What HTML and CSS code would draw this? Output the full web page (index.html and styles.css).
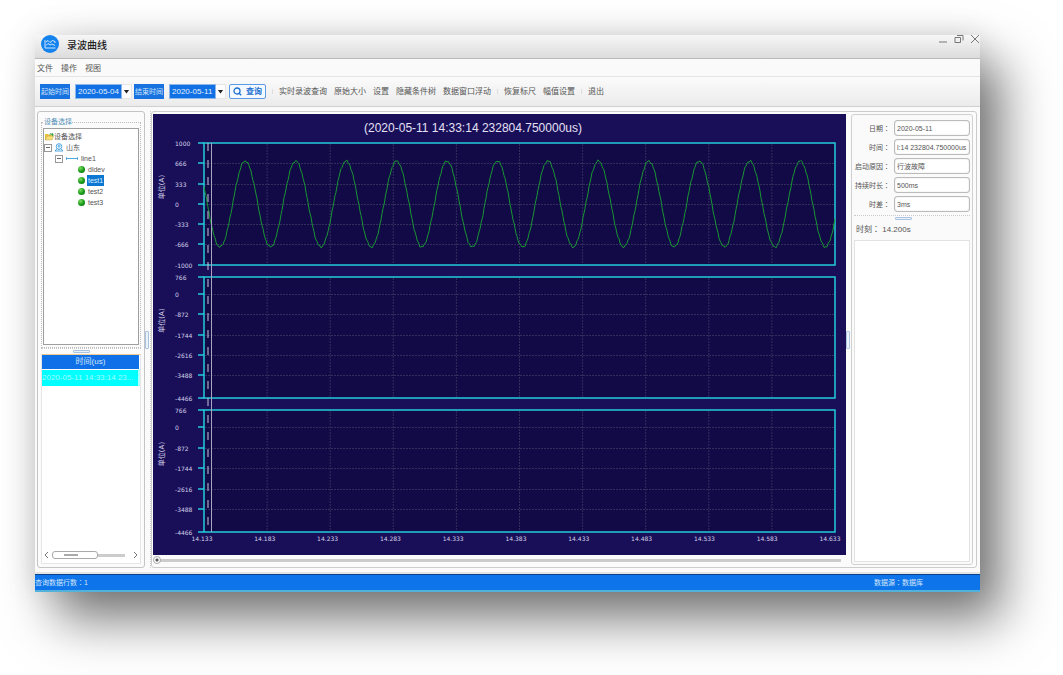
FILE: index.html
```html
<!DOCTYPE html>
<html lang="zh-CN">
<head>
<meta charset="utf-8">
<title>录波曲线</title>
<link rel="stylesheet" href="styles.css">
</head>
<body>
<div class="window">
  <header class="titlebar">
    <svg class="logo" viewBox="0 0 18 18" aria-hidden="true"><circle cx="9" cy="9" r="9" fill="#1583ee"/><path d="M4 5v8h10.500M5 7l2-1.500 2 2 2.500-2 2.500 1v1.500M5 10.500l2-2 2 1.500 2-1 3 1.500" fill="none" stroke="#fff" stroke-width=".8"/></svg>
    <h1>录波曲线</h1>
    <div class="winbuttons">
      <button type="button" aria-label="最小化"><svg viewBox="0 0 10 10"><path d="M1 8h8"/></svg></button>
      <button type="button" aria-label="还原"><svg viewBox="0 0 10 10"><path d="M1 3.500h5.500v5H1zM3 1.500h6v5"/></svg></button>
      <button type="button" aria-label="关闭"><svg viewBox="0 0 10 10"><path d="M1 1l8 8M9 1l-8 8"/></svg></button>
    </div>
  </header>

  <nav class="menubar">
    <button type="button">文件</button>
    <button type="button">操作</button>
    <button type="button">视图</button>
  </nav>

  <div class="toolbar">
    <label class="tag" for="from">起始时间</label>
    <span class="date"><input id="from" type="text" value="2020-05-04"><button type="button" aria-label="选择起始日期"></button></span>
    <label class="tag tag-end" for="to">结束时间</label>
    <span class="date"><input id="to" type="text" value="2020-05-11"><button type="button" aria-label="选择结束日期"></button></span>
    <button class="search" type="button"><svg viewBox="0 0 9 9" aria-hidden="true"><circle cx="4" cy="4" r="3" /><path d="M6 6l2.200 2.200"/></svg>查询</button>
    <span class="sep"></span>
    <div class="actions">
      <button type="button">实时录波查询</button>
      <button type="button">原始大小</button>
      <button type="button">设置</button>
      <button type="button">隐藏条件树</button>
      <button type="button">数据窗口浮动</button>
    </div>
    <span class="sep"></span>
    <div class="actions">
      <button type="button">恢复标尺</button>
      <button type="button">幅值设置</button>
    </div>
    <span class="sep"></span>
    <div class="actions"><button type="button">退出</button></div>
  </div>

  <div class="content">
    <aside class="side">
      <fieldset class="group">
        <legend>设备选择</legend>
        <ul class="tree">
          <li class="lv0 root"><svg viewBox="0 0 10 9" aria-hidden="true"><path d="M1 8V2h3l1 1h3v5z" fill="#e9c243"/><path d="M1 8l2-4h6.500L8 8z" fill="#f8e078" stroke="#a98b25" stroke-width=".4"/><path d="M5 3c1-2 2-2 3-1V.5L9.800 3 8 4.200V3c-1-.6-2-.4-3 0z" fill="#2d9a37"/></svg><span>设备选择</span></li>
          <li class="lv0"><i class="minus"></i><svg viewBox="0 0 10 9" aria-hidden="true"><g fill="none" stroke="#3a9de0" stroke-width=".9"><circle cx="5" cy="3.500" r="2.800"/><circle cx="5" cy="3.200" r="1"/><path d="M3 5.800L1 8h8L7 5.800M5 6v1"/></g></svg><span>山东</span></li>
          <li class="lv1"><i class="minus"></i><svg class="line" viewBox="0 0 14 9" aria-hidden="true"><path d="M1 4.500h12M1.500 3.200v2.600M12.500 3.200v2.600" fill="none" stroke="#4aa8dc"/></svg><span>line1</span></li>
          <li class="lv2"><i class="dot"></i><span>dldev</span></li>
          <li class="lv2"><i class="dot"></i><span class="selected">test1</span></li>
          <li class="lv2"><i class="dot"></i><span>test2</span></li>
          <li class="lv2"><i class="dot"></i><span>test3</span></li>
        </ul>
      </fieldset>
      <div class="hsplit"><i></i></div>
      <div class="records">
        <table>
          <thead><tr><th>时间(us)</th></tr></thead>
          <tbody><tr><td>2020-05-11 14:33:14 23...</td></tr></tbody>
        </table>
        <div class="hscroll">
          <button type="button" aria-label="向左"><svg viewBox="0 0 5 8"><path d="M4 1L1 4l3 3"/></svg></button>
          <div class="rail"><i></i></div>
          <button type="button" aria-label="向右"><svg viewBox="0 0 5 8"><path d="M1 1l3 3-3 3"/></svg></button>
        </div>
      </div>
    </aside>

    <div class="vsplit"><i></i></div>

    <main class="workspace">
      <section class="plot">
        <svg id="chart" class="chart" viewBox="0 0 693 441" role="img" aria-label="录波曲线图"></svg>
        <input class="slider" type="range" min="0" max="100" value="0" aria-label="时间位置">
      </section>
      <div class="vsplit vsplit-right"><i></i></div>
      <section class="detail">
        <form class="fields">
          <label for="d1">日期<span class="colon" lang="zh-TW">：</span></label><input id="d1" type="text" value="2020-05-11">
          <label for="d2">时间<span class="colon" lang="zh-TW">：</span></label><input id="d2" type="text" value="l:14 232804.750000us">
          <label for="d3">启动原因<span class="colon" lang="zh-TW">：</span></label><input id="d3" type="text" value="行波故障">
          <label for="d4">持续时长<span class="colon" lang="zh-TW">：</span></label><input id="d4" type="text" value="500ms">
          <label for="d5">时差<span class="colon" lang="zh-TW">：</span></label><input id="d5" type="text" value="3ms">
        </form>
        <div class="hsplit hsplit-detail"><i></i></div>
        <p class="moment">时刻<span class="colon" lang="zh-TW">：</span> 14.200s</p>
        <div class="values"></div>
      </section>
    </main>
  </div>

  <footer class="status"><span>查询数据行数<span class="colon" lang="zh-TW">：</span>1</span><span class="source">数据源<span class="colon" lang="zh-TW">：</span>数据库</span></footer>
</div>
<script src="chart.js"></script>
</body>
</html>
```

FILE: styles.css
```css
* { box-sizing: border-box; }

body {
  margin: 0;
  min-height: 100vh;
  padding: 35px 83px 83px 35px;
  background: #fff;
  color: #555;
  font: 8px/12px "Liberation Sans", "Noto Sans CJK SC", sans-serif;
  overflow-x: hidden;
}

button, input { margin: 0; padding: 0; font: inherit; color: inherit; }
button { border: 0; background: none; white-space: nowrap; }
.colon { font-family: "Noto Sans CJK TC", sans-serif; }

.window {
  display: flex;
  flex-direction: column;
  min-height: calc(100vh - 118px);
  background: #fafafa;
  box-shadow: 22px 28px 48px rgba(0, 0, 0, .52), 0 0 30px rgba(0, 0, 0, .12);
}

.titlebar {
  display: flex;
  align-items: center;
  height: 24px;
  padding: 0 0 5px 6px;
  background: linear-gradient(#f6f6f6, #dcdcdc);
  border-bottom: 1px solid #b9b9b9;
}
.logo { width: 18px; height: 18px; }
.titlebar h1 { margin: 0 0 0 8px; font-size: 10px; font-weight: 500; color: #222; padding-top: 4px; }
.winbuttons { display: flex; gap: 6px; margin-left: auto; padding-bottom: 11px; }
.winbuttons button { display: flex; height: 10px; }
.winbuttons svg { width: 10px; height: 10px; fill: none; stroke: #777; }

.menubar {
  display: flex;
  gap: 8px;
  height: 18px;
  padding: 2px 2px 0;
  background: #fafafa;
  border-bottom: 1px solid #e4e4e4;
}

.toolbar {
  display: flex;
  align-items: center;
  height: 30px;
  padding: 0 5px;
  background: linear-gradient(#fbfbfb, #ebebeb);
  border-bottom: 1px solid #d0d0d0;
}
.tag { height: 15px; width: 30px; background: #1873e0; color: #cfe3fb; font-size: 7px; line-height: 15px; text-align: center; white-space: nowrap; }
.date { display: flex; margin-left: 5px; }
.date input { width: 47px; height: 15px; padding: 0 2px; border: 1px solid #8fb8ea; background: #1070e4; color: #e4f0ff; }
.date button { width: 10px; height: 15px; border: 1px solid #e6e6e6; border-left: 0; background: #fcfcfc; }
.date button::after { content: ""; display: block; margin: 0 auto; width: 6px; height: 4px; background: #222; clip-path: polygon(0 0, 100% 0, 50% 100%); }
.tag-end { margin-left: 2px; }
.search {
  display: flex;
  align-items: center;
  justify-content: center;
  gap: 4px;
  width: 37px;
  height: 15px;
  margin-left: 3px;
  border: 1px solid #5a9be6;
  border-radius: 2px;
  background: #f4f9ff;
  color: #1b6fd0;
  font-weight: 700;
}
.search svg { width: 9px; height: 9px; fill: none; stroke: #1b6fd0; stroke-width: 1.3; }
.sep { width: 1px; height: 5px; margin: 0 6px; background: #dedede; }
.actions { display: flex; gap: 7px; }

.content {
  display: flex;
  flex: 1;
  padding: 4px 3px 4px 2px;
  border-bottom: 2px solid #e4e4e4;
}

.side {
  display: flex;
  flex-direction: column;
  flex: 0 0 108px;
  min-width: 0;
  padding: 4px 3px 3px;
  border: 1px solid #c4c4c4;
  border-radius: 3px;
  background: #fbfbfb;
}
.group { display: flex; flex: 0 0 232px; min-width: 0; margin: 0; padding: 0 1px 2px; border: 1px dotted #bbb; }
.group legend { margin-left: 1px; padding: 0; color: #5591b6; font-size: 7px; line-height: 12px; }
.tree { flex: 1; margin: 0; padding: 2px 0; border: 1px solid #9f9f9f; background: #fff; list-style: none; font-size: 7px; }
.tree li { display: flex; align-items: center; gap: 2px; height: 11px; line-height: 11px; }
.tree .root { gap: 0; }
.tree svg { width: 10px; height: 9px; }
.tree .line { width: 14px; }
.lv1 { padding-left: 11px; }
.lv2 { padding-left: 34px; }
.minus { width: 8px; height: 8px; border: 1px solid #999; background: linear-gradient(#666, #666) center / 4px 1px no-repeat; }
.dot { width: 7px; height: 7px; border-radius: 50%; background: radial-gradient(circle at 35% 30%, #7cdb5c, #149618 55%, #0c6a10); }
.lv2 span { padding: 0 1px; }
.tree .selected { background: #0c77d2; color: #d9ebff; }

.hsplit { display: flex; align-items: center; height: 6px; border-top: 1px dotted #ccc; }
.hsplit i { width: 17px; height: 3px; margin: 0 auto; border: 1px solid #a9c3e0; border-radius: 1px; background: #eaf2fb; }
.side .hsplit i { margin-left: 32px; }

.records { display: flex; flex: 1; flex-direction: column; border: 1px solid #e6e6e6; border-top-color: #f0c990; background: #fff; }
.records table { width: 100%; border-collapse: collapse; table-layout: fixed; }
.records th { height: 14px; padding: 0; border-bottom: 1px solid #fff; background: #1070e8; color: #d6e7fb; font-weight: 400; }
.records td { height: 17px; padding: 0; background: #0ff; color: #a2fbff; white-space: nowrap; border-right: 2px solid #b0ffff; }
.hscroll { display: flex; align-items: center; gap: 3px; margin-top: auto; padding: 2px 2px 4px; }
.hscroll button { display: flex; }
.hscroll svg { width: 5px; height: 8px; fill: none; stroke: #777; }
.rail { flex: 1; height: 8px; margin-right: 5px; background: linear-gradient(#ccc, #ccc) center / 100% 3px no-repeat; }
.rail i { display: block; width: 46px; height: 8px; border: 1px solid #aaa; border-radius: 3px; background: linear-gradient(#aaa, #aaa) 11px 2px / 14px 2px no-repeat #fff; }

.vsplit { display: flex; flex: 0 0 6px; align-items: center; border-right: 1px dotted #ccc; }
.vsplit i { width: 4px; height: 18px; border: 1px solid #a9c3e0; border-radius: 1px; background: #eaf2fb; }

.workspace {
  display: flex;
  flex: 1;
  min-width: 0;
  padding: 2px 3px 2px 1px;
  border: 1px solid #ccc;
  border-radius: 3px;
  background: #fbfbfb;
}
.plot { display: flex; flex: 1; flex-direction: column; min-width: 0; }
.chart { display: block; width: 100%; background: #190f59; }
.chart text { fill: #d4d0e8; font: 6px "DejaVu Sans", "Noto Sans CJK SC", sans-serif; }
.chart .heading { fill: #e4e1f4; font: 12px "Liberation Sans", sans-serif; text-anchor: middle; }
.chart .xlabel { text-anchor: middle; }
.chart .unit { font-size: 7px; text-anchor: middle; }
.chart .area { fill: #120a46; stroke: #25cbdc; stroke-width: 1.500; }
.chart .tick { stroke: #25cbdc; stroke-width: 1.500; }
.chart .grid { stroke: #332d5e; stroke-width: 1; stroke-dasharray: 2 1; }
.chart .wave { fill: none; stroke: #189633; stroke-width: 1; }
.chart .cursor { stroke: #aaa5c2; }
.chart .ruler { stroke: #c9c5dc; stroke-dasharray: 8 9; }

.slider { appearance: none; flex: 1; width: 100%; min-height: 8px; background: linear-gradient(#ccc, #ccc) center / calc(100% - 10px) 3px no-repeat; }
.slider::-webkit-slider-thumb { appearance: none; width: 8px; height: 8px; border: 1px solid #aaa; border-radius: 50%; background: radial-gradient(circle, #555 1px, #fff 2px); }

.vsplit-right { flex-basis: 5px; border: 0; }
.vsplit-right i { margin-left: 0; }

.detail {
  display: flex;
  flex: 0 0 122px;
  flex-direction: column;
  min-width: 0;
  padding: 5px 2px 2px;
  border: 1px solid #d0d0d0;
  border-radius: 3px;
  background: #fafafa;
}
.fields { display: grid; grid-template-columns: 1fr 76px; column-gap: 4px; row-gap: 3px; align-items: center; font-size: 7px; }
.fields label { text-align: right; white-space: nowrap; }
.fields input { width: 100%; height: 16px; padding: 0 2px; border: 1px solid #bbb; border-radius: 3px; background: #fff; box-shadow: inset 0 0 1px #aaa; }
.hsplit-detail { margin-top: 3px; }
.hsplit-detail i { margin-left: 41px; }
.moment { margin: 2px 2px 4px; line-height: 12px; white-space: pre; }
.values { flex: 1; border: 1px solid #e2e2e2; background: #fff; }

.status {
  display: flex;
  align-items: center;
  height: 18px;
  background: #0e74ea;
  border-top: 1px solid #08448c;
  border-bottom: 2px solid #53b2dc;
  color: #d2e6fc;
  font-size: 7px;
}
.source { margin-left: auto; margin-right: 57px; }
```

FILE: chart.js
```javascript
const chart = document.getElementById("chart");
const NS = "http://www.w3.org/2000/svg";

function add(name, attrs, text) {
  const node = document.createElementNS(NS, name);
  for (const key in attrs) node.setAttribute(key, attrs[key]);
  if (text !== undefined) node.textContent = text;
  chart.appendChild(node);
}
function line(cls, x1, y1, x2, y2) {
  add("line", { class: cls, x1, y1, x2, y2 });
}

const left = 51, right = 682, step = (right - left) / 10;
const panels = [
  { ticks: [[29, "1000"], [49, "666"], [70, "333"], [90, "0"], [110, "-333"], [130, "-666"], [151, "-1000"]] },
  { ticks: [[163, "766"], [180, "0"], [200, "-872"], [221, "-1744"], [241, "-2616"], [261, "-3488"], [284, "-4466"]] },
  { ticks: [[296, "766"], [313, "0"], [334, "-872"], [354, "-1744"], [375, "-2616"], [395, "-3488"], [418, "-4466"]] }
];

add("text", { class: "heading", x: 320, y: 18 }, "(2020-05-11 14:33:14 232804.750000us)");

for (const { ticks } of panels) {
  const top = ticks[0][0], bottom = ticks[6][0];
  add("rect", { class: "area", x: left, y: top, width: right - left, height: bottom - top });
  for (let i = 1; i < 10; i++) line("grid", left + step * i, top + 1, left + step * i, bottom - 1);
  ticks.forEach(([y, label], i) => {
    if (i > 0 && i < 6) line("grid", left + 1, y + 0.5, right - 1, y + 0.5);
    line("tick", left - 6, y, left, y);
    add("text", { x: 22, y: y + 3 }, label);
  });
  const middle = (top + bottom) / 2 - 17;
  add("text", { class: "unit", transform: `translate(11 ${middle}) rotate(-90)` }, "单位(A)");
}

for (let i = 0; i <= 10; i++) {
  add("text", { class: "xlabel", x: 49 + i * 62.8, y: 427 }, (14.133 + i * 0.05).toFixed(3));
}

let path = "";
for (let x = left; x <= right; x += 1) {
  const noise = Math.sin(x * 2.1) * 0.8 + Math.sin(x * 0.9) * 0.5;
  const y = 90 + 43 * Math.cos((2 * Math.PI * (x - 67)) / 50.45) + noise;
  path += (path ? "L" : "M") + x.toFixed(1) + " " + y.toFixed(1);
}
add("path", { class: "wave", d: path });
line("ruler", 55, 29, 55, 418);
line("cursor", 58.5, 29, 58.5, 418);
```
